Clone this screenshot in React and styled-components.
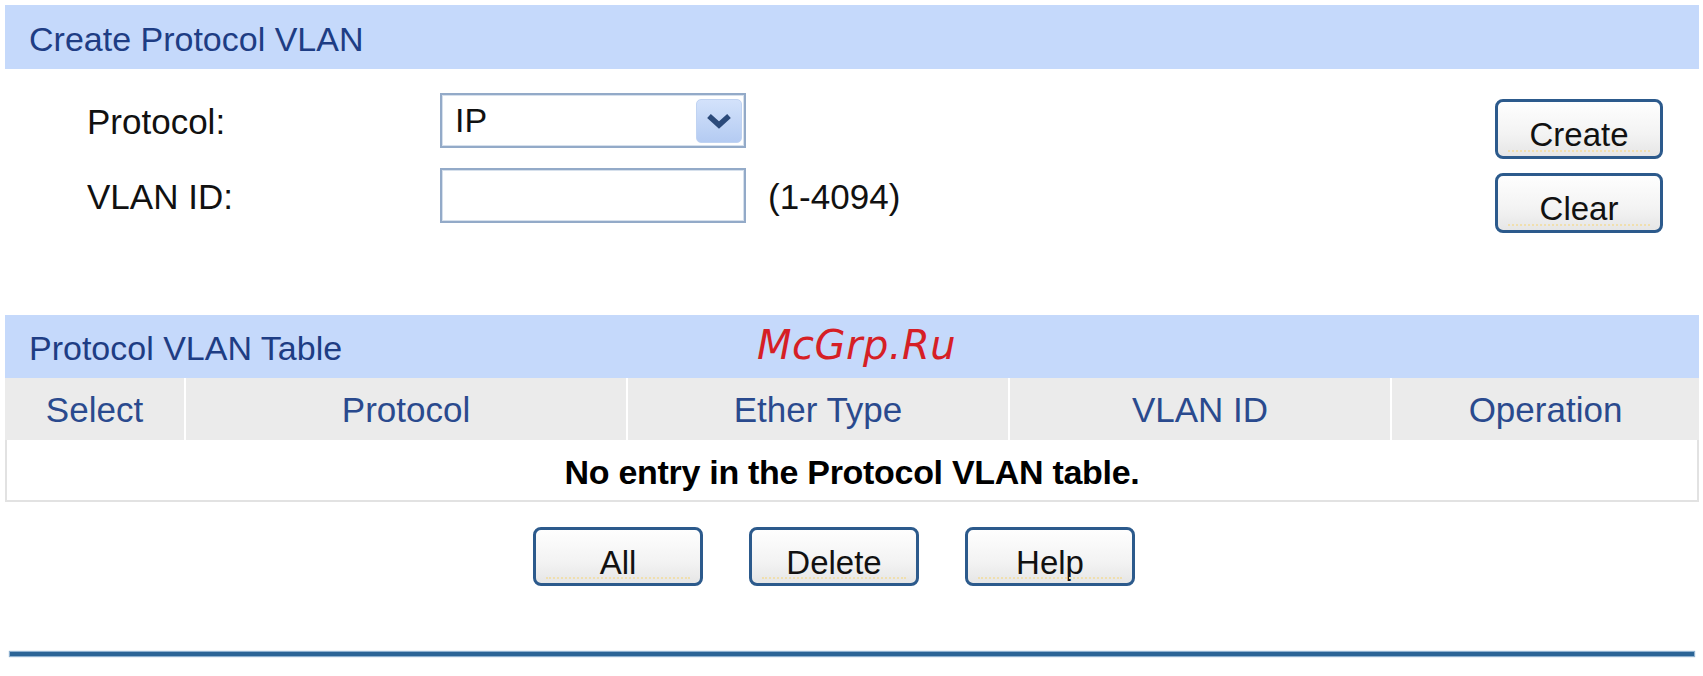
import React from "react";
import styled, { createGlobalStyle } from "styled-components";

const GlobalStyle = createGlobalStyle`
  html, body {
    margin: 0;
    padding: 0;
    background: #fff;
  }
  body {
    font-family: "Liberation Sans", Arial, sans-serif;
    color: #111;
  }
`;

const columns = ["Select", "Protocol", "Ether Type", "VLAN ID", "Operation"];

const App = () => {
  return (
    <>
      <GlobalStyle />
      <Page>
        <SectionTitle>Create Protocol VLAN</SectionTitle>
        <FormArea>
          <FormGrid>
            <Label>Protocol:</Label>
            <SelectBox>
              <span>IP</span>
              <ArrowBox>
                <svg width="26" height="18" viewBox="0 0 26 18">
                  <path
                    d="M3 4 L13 13 L23 4"
                    fill="none"
                    stroke="#2b4a7a"
                    strokeWidth="5.5"
                    strokeLinejoin="miter"
                  />
                </svg>
              </ArrowBox>
            </SelectBox>
            <Hint />
            <Label>VLAN ID:</Label>
            <TextInput type="text" />
            <Hint>(1-4094)</Hint>
          </FormGrid>
          <ButtonColumn>
            <Button>Create</Button>
            <Button>Clear</Button>
          </ButtonColumn>
        </FormArea>

        <SectionTitle $tall={63}>
          Protocol VLAN Table
          <Watermark>McGrp.Ru</Watermark>
        </SectionTitle>
        <Table>
          {columns.map((c) => (
            <HeadCell key={c}>{c}</HeadCell>
          ))}
          <EmptyRow>No entry in the Protocol VLAN table.</EmptyRow>
        </Table>

        <Actions>
          <Button>All</Button>
          <Button>Delete</Button>
          <Button>Help</Button>
        </Actions>

        <Rule />
      </Page>
    </>
  );
};

export default App;

const Page = styled.div`
  width: 1703px;
  height: 676px;
  padding-top: 5px;
  box-sizing: border-box;
  overflow: hidden;
`;

const SectionTitle = styled.div`
  position: relative;
  margin-left: 5px;
  width: 1694px;
  height: ${(p) => p.$tall || 64}px;
  box-sizing: border-box;
  padding: 4px 0 0 24px;
  background: #c5d9fb;
  color: #1e3d84;
  font-size: 34px;
  line-height: ${(p) => (p.$tall || 64) - 4}px;
  white-space: nowrap;
`;

const Watermark = styled.span`
  position: absolute;
  left: 752px;
  top: 2px;
  font-family: "DejaVu Sans", sans-serif;
  font-style: italic;
  font-size: 40px;
  line-height: 56px;
  color: #d61f26;
  letter-spacing: 0.5px;
`;

const FormArea = styled.div`
  display: flex;
  justify-content: space-between;
  height: 246px;
  box-sizing: border-box;
  padding: 24px 40px 0 87px;
`;

const FormGrid = styled.div`
  display: grid;
  grid-template-columns: 353px 306px auto;
  grid-auto-rows: 55px;
  row-gap: 20px;
  align-items: center;
  align-content: start;
`;

const Label = styled.div`
  font-size: 35px;
  color: #111;
  padding-top: 2px;
`;

const Hint = styled.div`
  font-size: 35px;
  color: #111;
  padding-left: 22px;
  padding-top: 2px;
`;

const SelectBox = styled.div`
  display: flex;
  align-items: center;
  justify-content: space-between;
  height: 55px;
  box-sizing: border-box;
  border: 2px solid #93aac8;
  box-shadow: inset 0 0 0 1px #d6e0ec;
  padding: 0 2px 0 13px;
  font-size: 34px;
  background: #fff;
`;

const ArrowBox = styled.div`
  display: flex;
  align-items: center;
  justify-content: center;
  width: 46px;
  height: 44px;
  border-radius: 5px;
  background: linear-gradient(#d3e2fb, #b4cbf2);
  border: 1px solid #c0d3f2;
  box-sizing: border-box;
`;

const TextInput = styled.input`
  height: 55px;
  width: 306px;
  box-sizing: border-box;
  border: 2px solid #93aac8;
  box-shadow: inset 0 0 0 1px #d6e0ec;
  outline: none;
  background: #fff;
  margin: 0;
`;

const ButtonColumn = styled.div`
  display: flex;
  flex-direction: column;
  gap: 14px;
  padding-top: 6px;
`;

const Button = styled.button`
  position: relative;
  width: 168px;
  height: 60px;
  box-sizing: border-box;
  border: 3px solid #2c5a8c;
  border-radius: 8px;
  background: linear-gradient(#fefefe 0%, #f3f3f3 60%, #e6e6e6 100%);
  font-family: "Liberation Sans", Arial, sans-serif;
  font-size: 33px;
  color: #111;
  padding: 12px 0 0;
  margin: 0;
  &::after {
    content: "";
    position: absolute;
    left: 10px;
    right: 10px;
    bottom: 4px;
    border-bottom: 2px dotted #f0dfae;
  }
`;

const Table = styled.div`
  margin-left: 5px;
  width: 1694px;
  display: grid;
  grid-template-columns: 179px 440px 380px 380px 1fr;
  column-gap: 2px;
  background: #fff;
`;

const HeadCell = styled.div`
  height: 62px;
  background: #ebebeb;
  color: #2a4a8e;
  font-size: 35px;
  display: flex;
  align-items: center;
  justify-content: center;
  padding-top: 2px;
  box-sizing: border-box;
`;

const EmptyRow = styled.div`
  grid-column: 1 / -1;
  height: 62px;
  box-sizing: border-box;
  border: 2px solid #e2e2e2;
  border-top: none;
  display: flex;
  align-items: center;
  justify-content: center;
  padding-top: 4px;
  font-size: 34px;
  font-weight: bold;
  color: #000;
  letter-spacing: -0.3px;
`;

const Actions = styled.div`
  display: flex;
  gap: 46px;
  padding: 25px 0 0 533px;
  & > button {
    width: 170px;
    height: 59px;
  }
`;

const Rule = styled.div`
  margin: 66px 0 0 10px;
  width: 1684px;
  height: 4px;
  background: #2b6496;
  box-shadow: 0 0 1px 1px #8fb1d0;
`;
